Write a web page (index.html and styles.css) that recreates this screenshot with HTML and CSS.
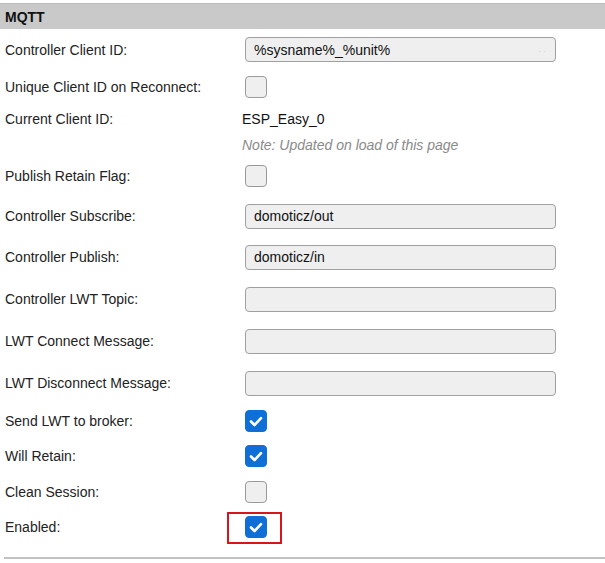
FILE: index.html
```html
<!DOCTYPE html>
<html>
<head>
<meta charset="utf-8">
<link rel="stylesheet" href="styles.css">
</head>
<body>
<div class="page">
  <div class="section-head">MQTT</div>

  <div class="row r-first">
    <div class="label">Controller Client ID:</div>
    <div class="value"><div class="field">%sysname%_%unit%<span class="grip">. .</span></div></div>
  </div>
  <div class="row r-cb1">
    <div class="label">Unique Client ID on Reconnect:</div>
    <div class="value"><span class="cb"></span></div>
  </div>
  <div class="row r-text">
    <div class="label">Current Client ID:</div>
    <div class="value text">ESP_Easy_0</div>
  </div>
  <div class="row r-note">
    <div class="label"></div>
    <div class="value note">Note: Updated on load of this page</div>
  </div>
  <div class="row r-cb2">
    <div class="label">Publish Retain Flag:</div>
    <div class="value"><span class="cb"></span></div>
  </div>
  <div class="row r-in1">
    <div class="label">Controller Subscribe:</div>
    <div class="value"><div class="field">domoticz/out</div></div>
  </div>
  <div class="row r-in">
    <div class="label">Controller Publish:</div>
    <div class="value"><div class="field">domoticz/in</div></div>
  </div>
  <div class="row r-in">
    <div class="label">Controller LWT Topic:</div>
    <div class="value"><div class="field"></div></div>
  </div>
  <div class="row r-in">
    <div class="label">LWT Connect Message:</div>
    <div class="value"><div class="field"></div></div>
  </div>
  <div class="row r-in">
    <div class="label">LWT Disconnect Message:</div>
    <div class="value"><div class="field"></div></div>
  </div>
  <div class="row r-cb3">
    <div class="label">Send LWT to broker:</div>
    <div class="value"><span class="cb checked"><svg viewBox="0 0 22 22" width="22" height="22"><path d="M6 11.5 L9.5 15 L16 8.2" fill="none" stroke="#fff" stroke-width="2.6" stroke-linecap="round" stroke-linejoin="round"/></svg></span></div>
  </div>
  <div class="row r-cb4">
    <div class="label">Will Retain:</div>
    <div class="value"><span class="cb checked"><svg viewBox="0 0 22 22" width="22" height="22"><path d="M6 11.5 L9.5 15 L16 8.2" fill="none" stroke="#fff" stroke-width="2.6" stroke-linecap="round" stroke-linejoin="round"/></svg></span></div>
  </div>
  <div class="row r-cb5">
    <div class="label">Clean Session:</div>
    <div class="value"><span class="cb"></span></div>
  </div>
  <div class="row r-cb6">
    <div class="label">Enabled:</div>
    <div class="value"><span class="cb checked highlighted"><svg viewBox="0 0 22 22" width="22" height="22"><path d="M6 11.5 L9.5 15 L16 8.2" fill="none" stroke="#fff" stroke-width="2.6" stroke-linecap="round" stroke-linejoin="round"/></svg><span class="mark"></span></span></div>
  </div>

  <div class="bottom-rule"></div>
</div>
</body>
</html>
```
FILE: styles.css
```css
html, body {
  margin: 0;
  padding: 0;
  background: #fff;
}
.page {
  width: 605px;
  height: 563px;
  font-family: "Liberation Sans", Arial, sans-serif;
  font-size: 14px;
  color: #222;
  padding-top: 3px;
  box-sizing: border-box;
  overflow: hidden;
}
.section-head {
  height: 26px;
  background: #c9c9c9;
  border-top: 1px solid #bdbdbd;
  box-sizing: border-box;
  font-weight: bold;
  color: #111;
  padding-left: 5px;
  display: flex;
  align-items: center;
}
.row {
  display: grid;
  grid-template-columns: 242px 1fr;
  align-items: center;
}
.r-first { height: 41px; }
.r-cb1 { height: 34px; }
.r-text { height: 30px; }
.r-note { height: 22px; }
.r-cb2 { height: 40px; }
.r-in1 { height: 40px; }
.r-in { height: 42px; }
.r-cb3 { height: 33px; }
.r-cb4 { height: 38px; }
.r-cb5 { height: 33px; }
.r-cb6 { height: 37px; }
.label {
  padding-left: 5px;
  color: #222;
}
.value {
  display: flex;
  align-items: center;
}
.text { color: #111; }
.note {
  font-style: italic;
  color: #8a8a8a;
}
.field {
  margin-left: 3px;
  width: 311px;
  height: 25px;
  box-sizing: border-box;
  border: 1px solid #a0a0a0;
  border-radius: 4px;
  background: #efefef;
  padding-left: 8px;
  display: flex;
  align-items: center;
  position: relative;
  color: #111;
}
.grip {
  position: absolute;
  right: 9px;
  top: 6px;
  font-size: 9px;
  color: #ccc;
  letter-spacing: 0;
}
.cb {
  margin-left: 3px;
  width: 22px;
  height: 22px;
  box-sizing: border-box;
  border: 1px solid #9a9a9a;
  border-radius: 4px;
  background: #efefef;
  display: inline-block;
  position: relative;
}
.cb.checked {
  background: #0f6fd6;
  border-color: #0f6fd6;
}
.cb svg {
  position: absolute;
  left: -1px;
  top: -1px;
}
.mark {
  position: absolute;
  left: -19px;
  top: -5px;
  width: 55px;
  height: 32px;
  box-sizing: border-box;
  border: 2px solid #d7151a;
}
.bottom-rule {
  margin-top: 12px;
  margin-left: 4px;
  height: 2px;
  background: #c2c2c2;
}
```
